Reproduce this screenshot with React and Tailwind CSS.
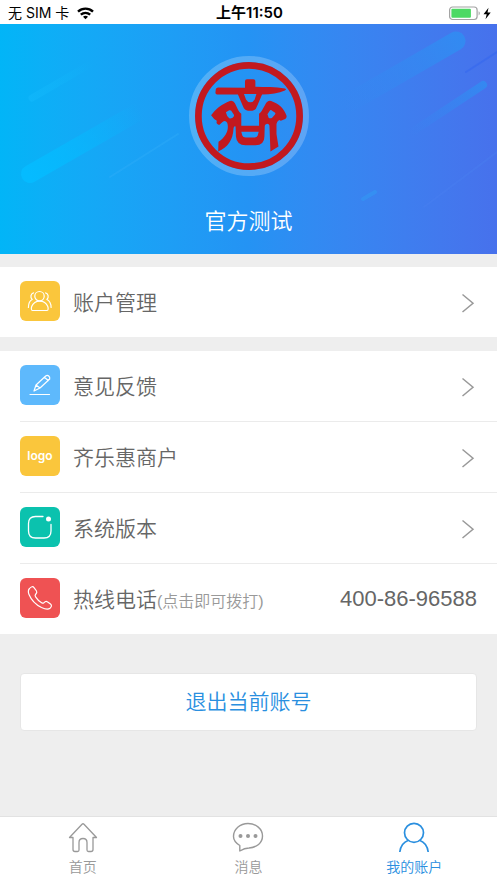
import React from "react";

const FONT = "font-['Liberation_Sans','Noto_Sans_CJK_SC',sans-serif]";

function StatusBar() {
  return (
    <header className="grid h-6 grid-cols-3 items-center bg-white pt-0.5 pr-1.5 pl-2 font-['Inter','Noto_Sans_CJK_SC',sans-serif] text-sm text-black">
      <div className="flex items-center gap-2">
        <span className="whitespace-nowrap">无 SIM 卡</span>
        <svg width="17" height="13" viewBox="0 0 17 13" fill="none" stroke="#000" strokeWidth="2.4" role="img" aria-label="Wi-Fi">
          <path d="M1 4.6C5.3.6 11.7.6 16 4.6" />
          <path d="M3.8 7.7c2.8-2.4 6.6-2.4 9.4 0" />
          <path d="M8.5 12.2 6 9.7c1.5-1.2 3.500-1.200 5 0z" fill="#000" stroke="none" />
        </svg>
      </div>
      <span className="text-center text-[15px] font-semibold whitespace-nowrap">上午11:50</span>
      <div className="flex items-center justify-end">
        <svg width="43" height="15" viewBox="0 0 43 15" role="img" aria-label="电量">
          <rect x="1.600" y="1" width="27.500" height="12.500" rx="3" fill="#fff" stroke="#a3a3a3" strokeWidth="1.200" />
          <rect x="3.400" y="2.800" width="19.500" height="9" rx="1" fill="#4cd964" />
          <path d="M30.600 5.200c1.600.6 1.600 3.600 0 4.200z" fill="#a3a3a3" />
          <path d="M40.500 1.800 35.500 8.200h3.200l-1.200 5 5.200-6.600h-3.200z" fill="#000" />
        </svg>
      </div>
    </header>
  );
}

function Streaks() {
  return (
    <svg className="absolute inset-0 h-full w-full" viewBox="0 0 497 230" preserveAspectRatio="none" fill="none" strokeLinecap="round" aria-hidden="true">
      <defs>
        <linearGradient id="cyanStreak" gradientUnits="userSpaceOnUse" x1="28" y1="152" x2="140" y2="86">
          <stop offset="0" stopColor="#05bbff" />
          <stop offset="1" stopColor="#05bbff" stopOpacity="0" />
        </linearGradient>
        <linearGradient id="cyanThin" gradientUnits="userSpaceOnUse" x1="30" y1="74" x2="92" y2="38">
          <stop offset="0" stopColor="#12b8fb" stopOpacity=".6" />
          <stop offset="1" stopColor="#12b8fb" stopOpacity="0" />
        </linearGradient>
        <linearGradient id="blueStreak" gradientUnits="userSpaceOnUse" x1="456" y1="17" x2="345" y2="88">
          <stop offset="0" stopColor="#308df2" stopOpacity=".85" />
          <stop offset="1" stopColor="#308df2" stopOpacity="0" />
        </linearGradient>
        <linearGradient id="blueThin" gradientUnits="userSpaceOnUse" x1="484" y1="60" x2="410" y2="110">
          <stop offset="0" stopColor="#308df2" stopOpacity=".8" />
          <stop offset="1" stopColor="#308df2" stopOpacity="0" />
        </linearGradient>
      </defs>
      <path d="M30 150 145 84" stroke="url(#cyanStreak)" strokeWidth="18" />
      <path d="M32 74 92 39" stroke="url(#cyanThin)" strokeWidth="7" />
      <path d="M110 153 178 110" stroke="#35aff8" strokeOpacity=".35" strokeWidth="2" />
      <path d="M456 17 340 84" stroke="url(#blueStreak)" strokeWidth="19" />
      <path d="M483 61 412 108" stroke="url(#blueThin)" strokeWidth="8" />
      <path d="M466 48 497 28" stroke="#3567ee" strokeOpacity=".6" strokeWidth="2" />
      <path d="M363 175 375 168" stroke="#3592f2" strokeOpacity=".8" strokeWidth="4" />
      <path d="M424 183 497 128" stroke="#4a80f2" strokeOpacity=".35" strokeWidth="2" />
    </svg>
  );
}

function Emblem() {
  return (
    <svg width="120" height="120" viewBox="26 17 358 358" role="img" aria-label="商户标志">
      <circle cx="205" cy="196" r="170" fill="none" stroke="#fff" strokeOpacity=".22" strokeWidth="18" />
      <circle cx="205" cy="196" r="151" fill="none" stroke="#c2191f" strokeWidth="20" />
      <g transform="translate(84 72)" fill="#c2191f" fillRule="evenodd">
        <path d="M109 20q0-6 6-6h19q6 0 6 6v17c30 1 60 0 88 5q7 2 0 6c-18 8-42 12-68 12l-15 35q-4 13-14 13h-13q-10 0-15-13L88 60H26q-6 0-5-7l1-9q1-5 7-5l80 1zM106 58l6 17q4 8 13 8t13-8l5-17z" />
        <path d="M8 122c12-18 32-34 56-43q10-3 15 7l10 21q3 7 9 10v36h53v-36q6-3 9-10l10-18q6-13 17-10c24 8 39 24 46 44q1 7-4 10l-13 5-5-2q-7 4-8 12v30l6 37-24 15-3-78q-1-5-7-5-6 1-7 6l-1 32q0 26-27 26h-29q-27 0-29-26l-1-30q-5-2-6 5c-2 38-17 57-46 70l1-29c24-17 32-37 26-57q-6-9-14-2l-10 9q-5-2-8-6l1-7-8-5zM52 113l10-6q6-1 8 4l6 9q1 3-1 6l-4 4q-5 2-9 1l-6-7zM176 119l8-12q3-2 6 1l9 6q2 3-1 6l-8 9q-4 3-10 1zM98 171l3 11q2 6 10 6h26q8 0 10-6l3-11z" />
      </g>
    </svg>
  );
}

function Tile({ color, children }) {
  return <span className={`mb-0.5 flex size-10 shrink-0 items-center justify-center rounded-md text-white ${color}`}>{children}</span>;
}

const tileSvg = {
  width: 40,
  height: 40,
  viewBox: "0 0 40 40",
  fill: "none",
  stroke: "currentColor",
  strokeWidth: 1.2,
  strokeLinecap: "round",
  strokeLinejoin: "round",
  "aria-hidden": true,
};

const PeopleIcon = () => (
  <svg {...tileSvg}>
    <circle cx="19.500" cy="15.200" r="4.700" />
    <path d="M12.500 29.500c-1.500 0-1.300-2.500-.7-4.200 1.300-3.200 4.200-5.200 7.900-5.200s6.700 2 8 5.200c.6 1.700.8 4.200-.7 4.200z" />
    <path d="M13.500 11.800c-2.800.7-3.500 4.700-1.300 6.700-2.200 1-3.700 3.500-3.800 8" />
    <path d="M25.600 11.800c2.800.7 3.500 4.700 1.300 6.700 2.200 1 4.100 3.500 4.200 8" />
  </svg>
);
const PencilIcon = () => (
  <svg {...tileSvg}>
    <path d="M14 26l2-6 9.700-9q1.600-1.200 3 0t1 3L20 23zM24.300 12.200l4 3.300M16 20l4 3" />
    <path d="M10 29.500h19.500" />
  </svg>
);
const VersionIcon = () => (
  <svg {...tileSvg} strokeWidth="1.300">
    <path d="M23 9.500h-7.500q-7 0-7 7v7.500q0 7 7 7h8.500q7 0 7-7v-6.500" />
    <circle cx="28.500" cy="12" r="2.500" fill="currentColor" stroke="none" />
  </svg>
);
const PhoneIcon = () => (
  <svg {...tileSvg}>
    <path d="M9.500 10.500c1.600-2 3.400-2.500 4.700-.7l2.300 3.200c1 1.500.1 2.300-1 3.500-.8.9-.5 1.400.1 2.300 1.600 2.500 3.500 4.400 6 6 .9.600 1.500.7 2.200 0 1.200-1.200 2.200-2 3.500-1l3.200 2.200c1.500 1.200 1.100 2.700-.5 4.200-2.300 2-5 .9-8.500-.7C15 26.300 11.500 22.500 9 16.500c-1-2.500-1-4.300.5-6z" />
  </svg>
);

const Chevron = () => (
  <svg width="16" height="20" viewBox="0 0 16 20" fill="none" stroke="#999" strokeWidth="1.500" className="mt-0.5 shrink-0" aria-hidden="true">
    <path d="M1.500 1.500 12 10.200 1.500 19" />
  </svg>
);

function Row({ icon, label, note, value }) {
  const Tag = value ? "a" : "button";
  const props = value ? { href: "tel:4008696588" } : { type: "button" };
  return (
    <Tag {...props} className="flex w-full items-center py-3.5 pr-5 text-left text-[#666]">
      {icon}
      <span className="ml-[13px] flex-1 pt-0.5 text-[21px] leading-8 font-[350] whitespace-nowrap">
        {label}
        {note && <span className="text-base text-[#999]">{note}</span>}
      </span>
      {value ? <span className="text-[22px] leading-8">{value}</span> : <Chevron />}
    </Tag>
  );
}

const tabSvg = { width: 32, height: 32, viewBox: "0 0 32 32", fill: "none", stroke: "currentColor", strokeLinejoin: "round", "aria-hidden": true };

const tabs = [
  {
    label: "首页",
    icon: (
      <svg {...tabSvg} strokeWidth="1.300">
        <path d="M2.500 16.500 15 3.200q1-1 2 0l12.500 13.300H26v12q0 2-2 2h-2.500q-1.500 0-1.500-1.500v-7.500q0-4-4-4t-4 4V29q0 1.500-1.500 1.500H8q-2 0-2-2v-12z" />
      </svg>
    ),
  },
  {
    label: "消息",
    icon: (
      <svg {...tabSvg} strokeWidth="1.400">
        <path d="M7.800 30v-5.500C3.800 22 1.500 19 1.500 15.500 1.500 8 8 2.500 16 2.500S30.500 8 30.500 15 24.500 26.500 17 27c-3.200 0-6 1-9.200 3z" />
        <g fill="currentColor" stroke="none">
          <circle cx="8.500" cy="15" r="2" />
          <circle cx="16" cy="15" r="2" />
          <circle cx="23.500" cy="15" r="2" />
        </g>
      </svg>
    ),
  },
  {
    label: "我的账户",
    active: true,
    icon: (
      <svg {...tabSvg} strokeWidth="1.700">
        <circle cx="16" cy="11.800" r="9.500" />
        <path d="M1.800 31C2.500 25 5.500 21 10.500 19.200M21.500 19.200C26.500 21 29.500 25 30.200 31" />
      </svg>
    ),
  },
];

export default function App() {
  return (
    <div className={`flex min-h-screen flex-col bg-[#eee] ${FONT}`}>
      <StatusBar />
      <main className="flex-1">
        <section className="relative flex flex-col items-center bg-linear-to-r from-[#02b5f7] via-[#2493f4] to-[#4771ec] pt-8 pb-4">
          <Streaks />
          <div className="relative">
            <Emblem />
          </div>
          <h1 className="relative mt-[30px] text-[22px] leading-8 font-[350] text-white">官方测试</h1>
        </section>

        <section className="mt-[13px] bg-white pl-5">
          <Row icon={<Tile color="bg-[#fac63c]"><PeopleIcon /></Tile>} label="账户管理" />
        </section>

        <section className="mt-3.5 divide-y divide-[#ebebeb] bg-white pl-5">
          <Row icon={<Tile color="bg-[#5eb9fc]"><PencilIcon /></Tile>} label="意见反馈" />
          <Row
            icon={<Tile color="bg-[#fac63c]"><span className="font-['Inter',sans-serif] text-xs leading-4 font-semibold">logo</span></Tile>}
            label="齐乐惠商户"
          />
          <Row icon={<Tile color="bg-[#0bc2ae]"><VersionIcon /></Tile>} label="系统版本" />
          <Row icon={<Tile color="bg-[#ef5253]"><PhoneIcon /></Tile>} label="热线电话" note="(点击即可拨打)" value="400-86-96588" />
        </section>

        <div className="px-5 pt-[39px] pb-8">
          <button type="button" className="h-[58px] w-full rounded-sm border border-[#e6e6e6] bg-white text-[21px] font-[350] text-[#2a8fdf]">
            退出当前账号
          </button>
        </div>
      </main>

      <nav className="grid grid-cols-3 border-t border-[#e2e2e2] bg-white pt-1 pb-1.5">
        {tabs.map((t) => (
          <a key={t.label} href="#" className={`flex flex-col items-center gap-1 text-sm font-[350] ${t.active ? "text-[#2a8fdf]" : "text-[#999]"}`}>
            {t.icon}
            <span className="leading-5">{t.label}</span>
          </a>
        ))}
      </nav>
    </div>
  );
}
